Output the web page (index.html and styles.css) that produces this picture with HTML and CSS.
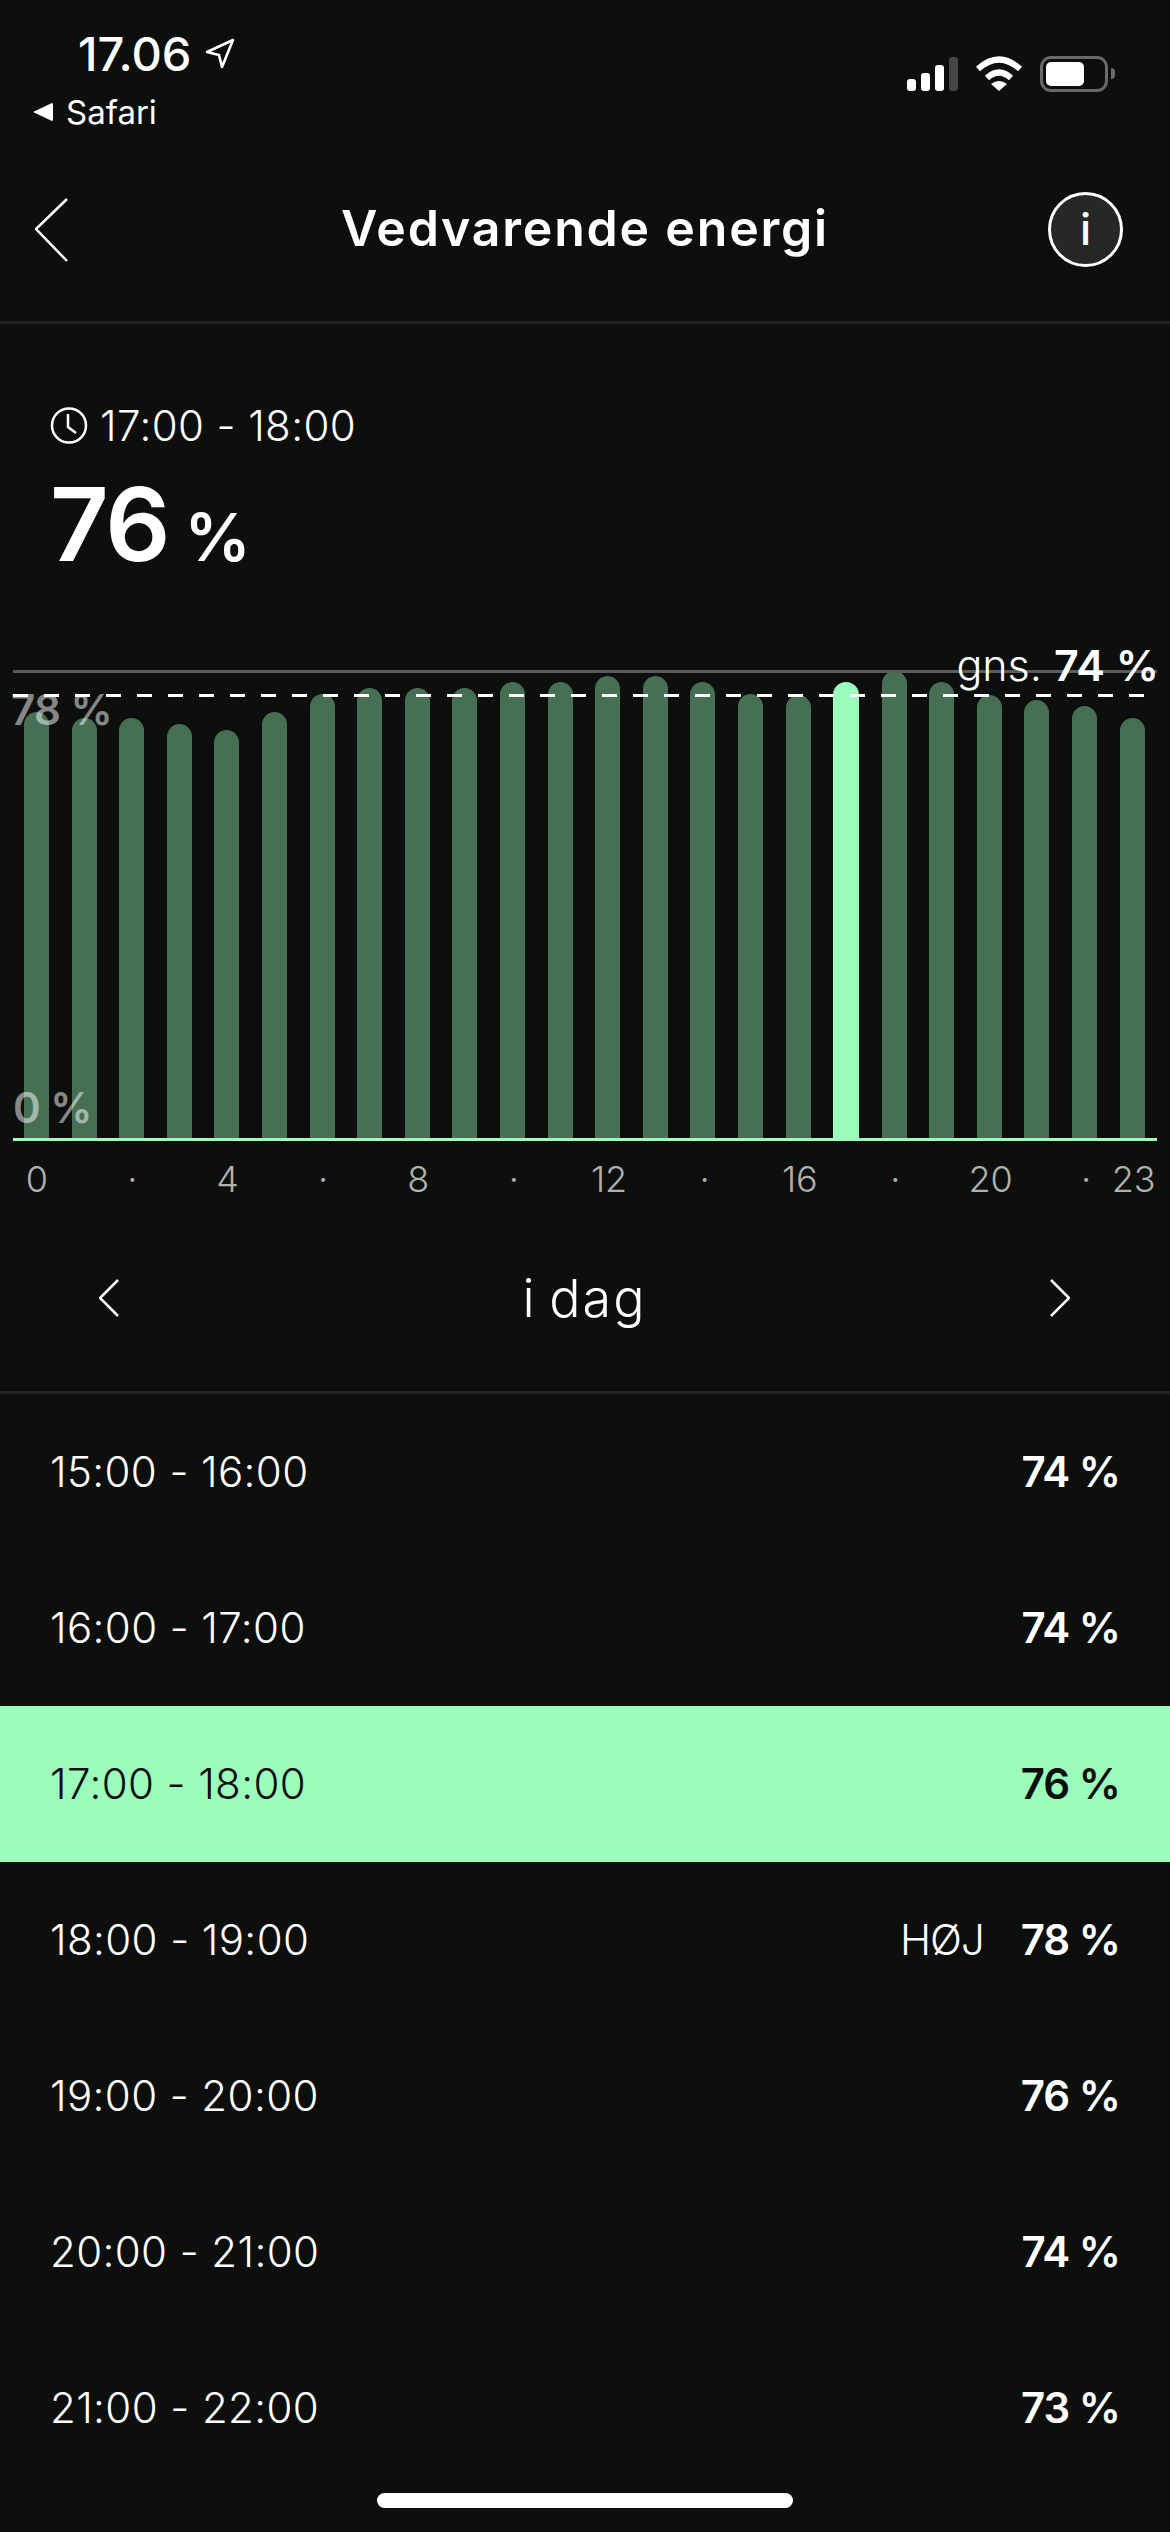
FILE: index.html
```html
<!DOCTYPE html>
<html>
<head>
  <meta charset="UTF-8">
  <title>Vedvarende energi</title>
  <link rel="stylesheet" href="styles.css">
</head>
<body>
  <div class="status">
    <div class="status-left">
      <div class="clock-row">
        <span class="clock-time">17.06</span>
        <svg class="location" width="30" height="31" viewBox="0 0 30 31"><path d="M28 2 L2 14 L14 17 L17 29 Z" fill="none" stroke="#fff" stroke-width="2.6" stroke-linejoin="round"/></svg>
      </div>
      <div class="back-app">
        <svg width="20" height="18" viewBox="0 0 20 18"><path d="M0 9 L19 0 Q20 0 20 2 L20 16 Q20 18 19 18 Z" fill="#fff"/></svg>
        <span>Safari</span>
      </div>
    </div>
    <div class="status-right">
      <div class="signal">
        <i class="sig s1"></i><i class="sig s2"></i><i class="sig s3"></i><i class="sig s4"></i>
      </div>
      <svg class="wifi" width="48" height="35" viewBox="0 0 48 35">
        <path d="M3 13 Q24 -6 45 13" fill="none" stroke="#fff" stroke-width="6"/>
        <path d="M12 22 Q24 11 36 22" fill="none" stroke="#fff" stroke-width="6"/>
        <path d="M16 28 Q24 22 32 28 L24 35 Z" fill="#fff"/>
      </svg>
      <div class="battery"><div class="battery-fill"></div></div>
      <div class="battery-nib"></div>
    </div>
  </div>

  <div class="header">
    <div class="header-side">
      <svg class="back" width="33" height="64" viewBox="0 0 33 64"><path d="M32 1 L1 31 L32 63" fill="none" stroke="#fff" stroke-width="2.5"/></svg>
    </div>
    <h1>Vedvarende energi</h1>
    <div class="header-side header-side-right">
      <div class="info">i</div>
    </div>
  </div>

  <div class="summary">
    <div class="summary-time">
      <svg width="38" height="37" viewBox="0 0 38 37"><circle cx="19" cy="18.5" r="17" fill="none" stroke="#fff" stroke-width="2.5"/><path d="M18 7 L18 20 L26 26" fill="none" stroke="#fff" stroke-width="2.5"/></svg>
      <span>17:00 - 18:00</span>
    </div>
    <div class="summary-value">76<span class="unit">%</span></div>
  </div>

  <div class="chart">
    <div class="top-line"></div>
    <div class="bars">
      <div class="bar" style="height:426px"></div>
      <div class="bar" style="height:420px"></div>
      <div class="bar" style="height:420px"></div>
      <div class="bar" style="height:414px"></div>
      <div class="bar" style="height:408px"></div>
      <div class="bar" style="height:426px"></div>
      <div class="bar" style="height:444px"></div>
      <div class="bar" style="height:450px"></div>
      <div class="bar" style="height:450px"></div>
      <div class="bar" style="height:450px"></div>
      <div class="bar" style="height:456px"></div>
      <div class="bar" style="height:456px"></div>
      <div class="bar" style="height:462px"></div>
      <div class="bar" style="height:462px"></div>
      <div class="bar" style="height:456px"></div>
      <div class="bar" style="height:444px"></div>
      <div class="bar" style="height:443px"></div>
      <div class="bar active" style="height:456px"></div>
      <div class="bar" style="height:467px"></div>
      <div class="bar" style="height:456px"></div>
      <div class="bar" style="height:443px"></div>
      <div class="bar" style="height:438px"></div>
      <div class="bar" style="height:432px"></div>
      <div class="bar" style="height:420px"></div>
    </div>
    <div class="dash-line"></div>
    <div class="max-label">78 %</div>
    <div class="zero-label">0 %</div>
    <div class="avg-label">gns. <b>74 %</b></div>
  </div>

  <div class="axis">
    <span class="tick">0</span>
    <span class="tick">·</span>
    <span class="tick">4</span>
    <span class="tick">·</span>
    <span class="tick">8</span>
    <span class="tick">·</span>
    <span class="tick">12</span>
    <span class="tick">·</span>
    <span class="tick">16</span>
    <span class="tick">·</span>
    <span class="tick">20</span>
    <span class="tick tick-end">·</span>
    <span class="tick tick-end">23</span>
  </div>

  <div class="day-nav">
    <svg width="20" height="38" viewBox="0 0 20 38"><path d="M19 1 L1 19 L19 37" fill="none" stroke="#fff" stroke-width="2.5"/></svg>
    <span>i dag</span>
    <svg width="20" height="38" viewBox="0 0 20 38"><path d="M1 1 L19 19 L1 37" fill="none" stroke="#fff" stroke-width="2.5"/></svg>
  </div>

  <div class="rows">
    <div class="row"><span class="row-time">15:00 - 16:00</span><b>74 %</b></div>
    <div class="row"><span class="row-time">16:00 - 17:00</span><b>74 %</b></div>
    <div class="row selected"><span class="row-time">17:00 - 18:00</span><b>76 %</b></div>
    <div class="row"><span class="row-time">18:00 - 19:00</span><span class="tag">HØJ</span><b>78 %</b></div>
    <div class="row"><span class="row-time">19:00 - 20:00</span><b>76 %</b></div>
    <div class="row"><span class="row-time">20:00 - 21:00</span><b>74 %</b></div>
    <div class="row"><span class="row-time">21:00 - 22:00</span><b>73 %</b></div>
  </div>

  <div class="home-bar"></div>
</body>
</html>
```

FILE: styles.css
```css
* {
  box-sizing: border-box;
}
html, body {
  margin: 0;
  padding: 0;
}
body {
  position: relative;
  width: 1170px;
  height: 2532px;
  overflow: hidden;
  background-color: #0d0f0d;
  color: #fff;
  font-family: Inter, "Noto Sans", sans-serif;
}

/* status bar */
.status {
  display: flex;
  justify-content: space-between;
  height: 138px;
}
.status-left {
  padding: 30px 0 0 33px;
}
.clock-row {
  display: flex;
  align-items: center;
  padding-left: 45px;
  height: 46px;
}
.clock-time {
  font-size: 47px;
  font-weight: 500;
}
.location {
  margin-left: 14px;
}
.back-app {
  display: flex;
  align-items: center;
  gap: 13px;
  margin-top: 19px;
  height: 34px;
  font-size: 33px;
  font-weight: 400;
}
.status-right {
  display: flex;
  align-items: flex-start;
  padding: 56px 55px 0 0;
}
.signal {
  display: flex;
  align-items: flex-end;
  gap: 5px;
  height: 35px;
}
.sig {
  display: block;
  width: 9px;
  border-radius: 3px;
  background-color: #fff;
}
.s1 { height: 12px; }
.s2 { height: 18px; }
.s3 { height: 26px; }
.s4 { height: 34px; background-color: #444644; }
.wifi {
  margin-left: 17px;
}
.battery {
  width: 68px;
  height: 36px;
  margin-left: 17px;
  padding: 3px;
  border: 3px solid #686a68;
  border-radius: 11px;
}
.battery-fill {
  width: 38px;
  height: 24px;
  border-radius: 5px;
  background-color: #fff;
}
.battery-nib {
  width: 4px;
  height: 11px;
  margin: 12px 0 0 3px;
  border-radius: 0 4px 4px 0;
  background-color: #686a68;
}

/* title bar */
.header {
  display: flex;
  align-items: center;
  height: 186px;
  padding: 0 47px;
  border-bottom: 3px solid #222422;
}
.header h1 {
  margin: 0 0 4px;
  font-size: 50px;
  font-weight: 600;
  letter-spacing: 1.8px;
}
.header-side {
  display: flex;
  flex: 1;
}
.header-side-right {
  justify-content: flex-end;
}
.back {
  margin-left: -12px;
}
.info {
  width: 75px;
  height: 75px;
  border: 3px solid #fff;
  border-radius: 50%;
  background-color: #262826;
  font-size: 44px;
  font-weight: 500;
  line-height: 68px;
  text-align: center;
}

/* selected hour */
.summary {
  height: 346px;
  padding: 73px 0 0 50px;
}
.summary-time {
  display: flex;
  align-items: center;
  gap: 12px;
  height: 56px;
  font-size: 42px;
  font-weight: 300;
  letter-spacing: 0.4px;
}
.summary-value {
  margin-top: 16px;
  font-size: 102px;
  font-weight: 600;
  letter-spacing: -2px;
  line-height: 110px;
}
.unit {
  margin-left: 16px;
  font-size: 66px;
  letter-spacing: 0;
}

/* chart */
.chart {
  position: relative;
  width: 1144px;
  margin-left: 13px;
}
.bars {
  display: flex;
  align-items: flex-end;
  justify-content: space-between;
  height: 471px;
  padding: 0 12px 0 11px;
  border-bottom: 3px solid #9bfcbb;
}
.bar {
  width: 25px;
  border-radius: 13px 13px 0 0;
  background-color: #466f53;
}
.bar.active {
  width: 26px;
  background-color: #9bfcbb;
}
.top-line {
  position: absolute;
  top: 0;
  left: 0;
  right: 0;
  height: 3px;
  background-color: #5a5c5a;
}
.dash-line {
  position: absolute;
  top: 24px;
  left: 0;
  right: 6px;
  height: 3px;
  background: repeating-linear-gradient(to right, #fff 0, #fff 15px, transparent 15px, transparent 31px);
}
.max-label, .zero-label {
  position: absolute;
  font-size: 42px;
  font-weight: 600;
  letter-spacing: -0.5px;
  color: rgba(255, 255, 255, 0.5);
}
.max-label {
  top: 14px;
  left: -2px;
}
.zero-label {
  top: 412px;
  left: 0;
}
.avg-label {
  position: absolute;
  top: -31px;
  right: -2px;
  font-size: 43px;
  font-weight: 300;
}
.avg-label b {
  font-weight: 600;
}

/* hour axis */
.axis {
  display: flex;
  height: 48px;
  margin-top: 14px;
  padding-left: 13px;
  font-size: 36px;
  font-weight: 300;
  line-height: 48px;
  color: #b0b2b0;
}
.tick {
  width: 47.7px;
  margin-right: 47.7px;
  text-align: center;
}
.tick-end {
  margin-right: 0;
}

/* day switcher */
.day-nav {
  display: flex;
  align-items: center;
  justify-content: space-between;
  height: 191px;
  padding: 2px 100px 0 99px;
  border-bottom: 3px solid #222422;
  font-size: 52px;
  font-weight: 300;
  letter-spacing: 2px;
  word-spacing: -4px;
}

/* hour list */
.row {
  display: flex;
  align-items: center;
  height: 156px;
  padding: 0 50px 2px 50px;
  font-size: 42px;
}
.row-time {
  flex: 1;
  font-weight: 300;
  letter-spacing: 0.4px;
}
.row b {
  font-weight: 600;
  letter-spacing: -1px;
}
.tag {
  margin-right: 37px;
  font-weight: 300;
  letter-spacing: -1px;
}
.row.selected {
  background-color: #9bfcbb;
  color: #0d0f0d;
}

.home-bar {
  position: absolute;
  left: 377px;
  bottom: 24px;
  width: 416px;
  height: 15px;
  border-radius: 8px;
  background-color: #fff;
}
```
